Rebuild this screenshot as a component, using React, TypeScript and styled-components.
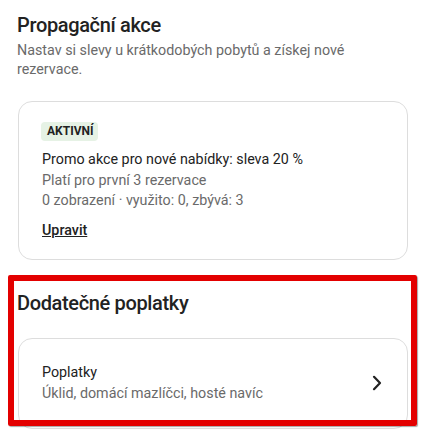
import React from "react";
import styled, { createGlobalStyle } from "styled-components";

const Global = createGlobalStyle`
  html, body { margin: 0; padding: 0; background: #fff; }
  body { font-family: Roboto, "Noto Sans", sans-serif; color: #222; -webkit-font-smoothing: antialiased; }
`;

const Page = styled.div`
  padding: 12px 23px 0 17px;
  width: 431px;
  box-sizing: border-box;
  height: 437px;
  overflow: hidden;
`;

const SectionTitle = styled.h2`
  margin: 0;
  font-size: 20px;
  line-height: 26px;
  font-weight: 500;
  letter-spacing: -0.35px;
  color: #222;
`;

const Subtitle = styled.p`
  margin: 3px 0 0;
  font-size: 14.3px;
  line-height: 19px;
  color: #6a6a6a;
`;

const Card = styled.div<{ $mt: number }>`
  margin-top: ${(p) => p.$mt}px;
  border: 1px solid #dddddd;
  border-radius: 14px;
  box-sizing: border-box;
  margin-left: 1px;
`;

const PromoBody = styled.div`
  padding: 20px 23px 19px;
  display: flex;
  flex-direction: column;
  align-items: flex-start;
`;

const Badge = styled.span`
  background: #e6f2e5;
  border-radius: 4px;
  padding: 0 5px 0 6px;
  margin-left: -1px;
  font-size: 12px;
  line-height: 19px;
  font-weight: 700;
  color: #222;
  margin-bottom: 8px;
`;

const Line = styled.div<{ $muted?: boolean }>`
  font-size: 14.3px;
  line-height: 20.5px;
  color: ${(p) => (p.$muted ? "#6a6a6a" : "#222")};
`;

const EditLink = styled.a`
  margin-top: 9px;
  font-size: 14.3px;
  line-height: 20px;
  font-weight: 500;
  color: #222;
  text-decoration: underline;
  cursor: pointer;
`;

const Section = styled.section`
  position: relative;
  margin-top: 15px;
  padding-top: 15px;
`;

const Highlight = styled.div`
  position: absolute;
  top: 0;
  left: -9px;
  right: -9px;
  height: 151px;
  border: 6px solid #e30000;
  border-radius: 2px;
  box-sizing: border-box;
  box-shadow: 1px 1px 1px rgba(0, 0, 0, 0.35);
  pointer-events: none;
`;

const Row = styled.div`
  display: flex;
  align-items: center;
  justify-content: space-between;
  padding: 23px 24px 24px 23px;
`;

const RowText = styled.div`
  display: flex;
  flex-direction: column;
`;

const RowTitle = styled.div`
  font-size: 14.3px;
  line-height: 21px;
  color: #222;
`;

const RowSub = styled.div`
  font-size: 14.3px;
  line-height: 21px;
  color: #6a6a6a;
`;

const Chevron = () => (
  <svg width="12" height="16" viewBox="0 0 12 16" fill="none">
    <path d="M3 1.8 L9 8 L3 14.2" stroke="#222" strokeWidth="2.2" strokeLinecap="round" strokeLinejoin="round" />
  </svg>
);

export default function App() {
  return (
    <Page>
      <Global />
      <SectionTitle>Propagační akce</SectionTitle>
      <Subtitle>Nastav si slevy u krátkodobých pobytů a získej nové rezervace.</Subtitle>
      <Card $mt={22}>
        <PromoBody>
          <Badge>AKTIVNÍ</Badge>
          <Line>Promo akce pro nové nabídky: sleva 20 %</Line>
          <Line $muted>Platí pro první 3 rezervace</Line>
          <Line $muted>0 zobrazení · využito: 0, zbývá: 3</Line>
          <EditLink>Upravit</EditLink>
        </PromoBody>
      </Card>
      <Section>
        <SectionTitle>Dodatečné poplatky</SectionTitle>
        <Card $mt={22}>
          <Row>
            <RowText>
              <RowTitle>Poplatky</RowTitle>
              <RowSub>Úklid, domácí mazlíčci, hosté navíc</RowSub>
            </RowText>
            <Chevron />
          </Row>
        </Card>
        <Highlight />
      </Section>
    </Page>
  );
}
